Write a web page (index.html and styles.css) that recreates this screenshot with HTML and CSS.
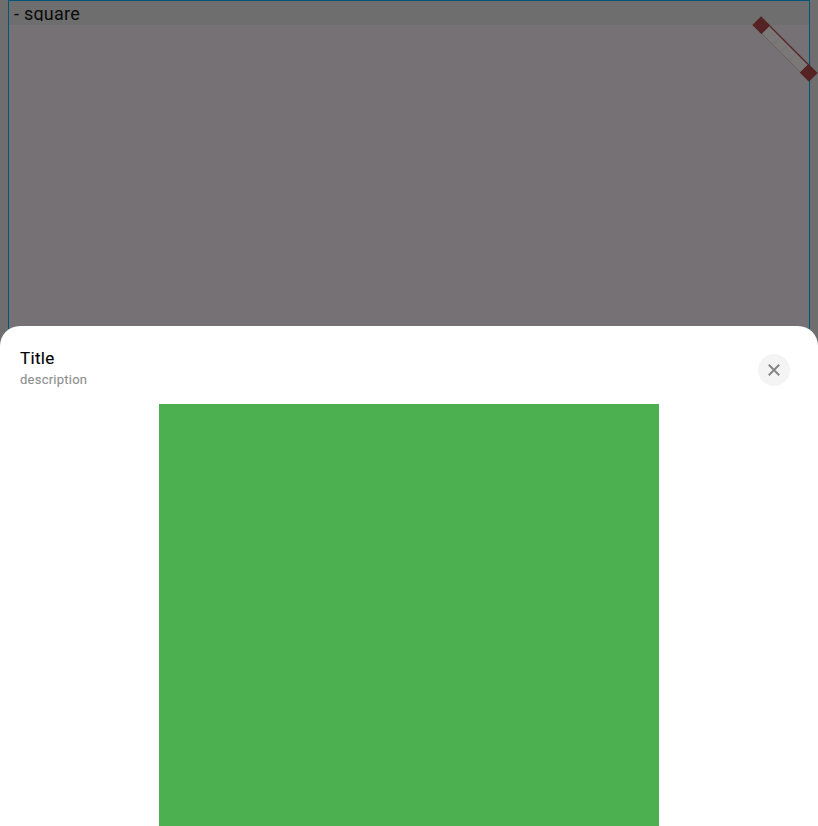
FILE: index.html
```
<!DOCTYPE html>
<html lang="en">
<head>
<meta charset="utf-8">
<title>Bottom sheet</title>
<link rel="stylesheet" href="styles.css">
</head>
<body>
<main class="screen">
  <section class="frame">
    <header class="frame-label">- square</header>
  </section>
  <svg class="ribbon" viewBox="0 0 68 68" aria-hidden="true">
    <g transform="translate(35 34) rotate(45)">
      <path class="ribbon-end" d="M-40-6.2h13V6.2h-13zM27-6.2h13V6.2H27z"/>
      <path class="ribbon-band" d="M-27-6h54V6h-54z"/>
      <path class="ribbon-top" d="M-27-5.5h54"/>
      <path class="ribbon-bottom" d="M-27 5.5h54"/>
      <path class="ribbon-mark" d="M-12-5V5M-1-5V5M11-5V5"/>
    </g>
  </svg>
  <section class="sheet">
    <header class="sheet-header">
      <div>
        <h1 class="title">Title</h1>
        <p class="description">description</p>
      </div>
      <button class="close" aria-label="Close">
        <svg width="32" height="32" viewBox="0 0 32 32"><path d="M10.8 10.8l10.4 10.4M21.2 10.8L10.8 21.2"/></svg>
      </button>
    </header>
    <div class="content"></div>
  </section>
</main>
</body>
</html>
```
FILE: styles.css
```
* { box-sizing: border-box; }
body { margin: 0; font-family: Roboto, sans-serif; }
.screen {
  position: relative;
  height: 826px;
  overflow: hidden;
  background: #6e6e6e;
}
.frame {
  height: 346px;
  margin: 0 8px;
  border: 1px solid #005479;
  border-bottom: 0;
  background: #767175;
}
.frame-label {
  height: 20px;
  padding-left: 5px;
  overflow: hidden;
  background: #6d6e6d;
  box-shadow: 0 4px 0 #6d6e6d;
  color: #0b0b0b;
  font-size: 18px;
  line-height: 26px;
  letter-spacing: .22px;
}
.ribbon {
  position: absolute;
  left: 750px;
  top: 15px;
  width: 68px;
  height: 68px;
}
.ribbon-end { fill: #552324; }
.ribbon-band { fill: #7b7878; }
.ribbon-top { stroke: #552325; stroke-width: 1.2; }
.ribbon-bottom { stroke: #675c5e; stroke-width: .9; }
.ribbon-mark { stroke: #6d6a6a; stroke-width: .6; }
.sheet {
  position: relative;
  height: 500px;
  margin-top: -20px;
  border-radius: 20px 20px 0 0;
  background: #fff;
}
.sheet-header {
  display: flex;
  justify-content: space-between;
  height: 78px;
  padding: 20px 28px 0 20px;
}
.title {
  margin: 0;
  color: #000;
  font-size: 17px;
  font-weight: 400;
  line-height: 24px;
  letter-spacing: .3px;
  -webkit-text-stroke: .15px #000;
}
.description {
  margin: 0;
  color: #8e8e8e;
  font-size: 13px;
  font-weight: 400;
  line-height: 20px;
  letter-spacing: .24px;
  -webkit-text-stroke: .12px #8e8e8e;
}
.close {
  width: 32px;
  height: 32px;
  margin-top: 8px;
  padding: 0;
  border: 0;
  border-radius: 50%;
  background: #f4f4f4;
}
.close svg { display: block; }
.close path { fill: none; stroke: #858585; stroke-width: 2; }
.content {
  width: 500px;
  height: 422px;
  margin: 0 auto;
  background: #4caf50;
}
```
